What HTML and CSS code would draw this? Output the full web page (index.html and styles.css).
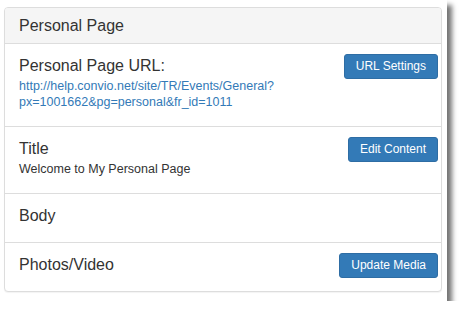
FILE: index.html
```html
<!DOCTYPE html>
<html>
<head>
<meta charset="utf-8">
<link rel="stylesheet" href="styles.css">
</head>
<body>
<div class="frame">
  <div class="panel">
    <div class="panel-heading">Personal Page</div>
    <div class="row">
      <div class="info">
        <div class="label">Personal Page URL:</div>
        <a class="link" href="#">http://help.convio.net/site/TR/Events/General?<br>px=1001662&amp;pg=personal&amp;fr_id=1011</a>
      </div>
      <button class="btn">URL Settings</button>
    </div>
    <div class="row">
      <div class="info">
        <div class="label">Title</div>
        <div class="value">Welcome to My Personal Page</div>
      </div>
      <button class="btn">Edit Content</button>
    </div>
    <div class="row">
      <div class="info">
        <div class="label">Body</div>
      </div>
    </div>
    <div class="row last">
      <div class="info">
        <div class="label">Photos/Video</div>
      </div>
      <button class="btn">Update Media</button>
    </div>
  </div>
</div>
</body>
</html>
```
FILE: styles.css
```css
html, body {
  margin: 0;
  padding: 0;
  background: #fff;
}
body {
  font-family: "Liberation Sans", Arial, sans-serif;
  color: #333;
}
.frame {
  width: 447px;
  height: 301px;
  box-sizing: border-box;
  padding: 7px 5px 0 4px;
  background: #fff;
  box-shadow: 5px 5px 5px rgba(0, 0, 0, 0.55);
}
.panel {
  border: 1px solid #dddddd;
  border-radius: 4px;
  background: #fff;
  box-shadow: 0 1px 1px rgba(0, 0, 0, 0.05);
}
.panel-heading {
  background: #f5f5f5;
  border-bottom: 1px solid #dddddd;
  border-radius: 3px 3px 0 0;
  padding: 8px 14px 8px 14px;
  font-size: 16px;
  line-height: 19px;
  color: #333;
}
.row {
  display: flex;
  justify-content: space-between;
  align-items: flex-start;
  padding: 12px 3px 0 14px;
  border-bottom: 1px solid #dddddd;
}
.row.last {
  border-bottom: none;
}
.info {
  padding-bottom: 16px;
}
.label {
  font-size: 16px;
  line-height: 20px;
  color: #333;
}
.link {
  display: block;
  margin-top: 2px;
  font-size: 12.5px;
  line-height: 16px;
  color: #337ab7;
  text-decoration: none;
}
.value {
  margin-top: 2px;
  font-size: 12.5px;
  line-height: 16px;
  color: #333;
}
.btn {
  margin-top: -2px;
  font-family: "Liberation Sans", Arial, sans-serif;
  font-size: 12px;
  line-height: 17px;
  padding: 3px 11px;
  color: #fff;
  background: #337ab7;
  border: 1px solid #2e6da4;
  border-radius: 3px;
  white-space: nowrap;
}
```
